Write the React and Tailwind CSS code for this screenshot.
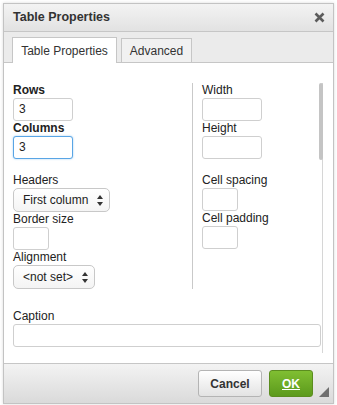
import React from "react";

const font = { fontFamily: '"Liberation Sans", Arial, sans-serif' };

// small up/down arrows used by the selects
const SelectArrows = () => (
  <svg width="6" height="11" viewBox="0 0 6 11" className="shrink-0">
    <path d="M3 0L6 4H0z" fill="#333" />
    <path d="M3 11L0 7h6z" fill="#333" />
  </svg>
);

const Field = ({ label, bold, width, value, focused }) => (
  <div className="flex flex-col">
    <label className={`text-[12px] leading-[15px] text-[#222] ${bold ? "font-bold" : ""}`}>
      {label}
    </label>
    <div
      className={`h-[23px] rounded-[3px] border bg-white px-[5px] text-[12px] leading-[21px] text-[#222] ${width} ${
        focused
          ? "border-[#59a5e5] shadow-[0_0_2px_rgba(89,165,229,0.6)]"
          : "border-[#cfcfcf]"
      }`}
    >
      {value}
    </div>
  </div>
);

const Select = ({ label, value, width }) => (
  <div className="flex flex-col">
    <label className="text-[12px] leading-[15px] text-[#222]">{label}</label>
    <div
      className={`flex h-[24px] items-center justify-between rounded-[5px] border border-[#c8c8c8] bg-gradient-to-b from-white to-[#f4f4f4] pl-[9px] pr-[6px] text-[12px] text-[#222] ${width}`}
    >
      <span>{value}</span>
      <SelectArrows />
    </div>
  </div>
);

export default function App() {
  return (
    <div className="h-[405px] w-[337px] overflow-hidden bg-white pl-[3px] pt-[3px]" style={font}>
      <div className="flex h-[401px] w-[331px] flex-col border border-[#c3c3c3] bg-white shadow-[0_0_3px_rgba(0,0,0,0.15)]">
        {/* Header */}
        <div className="flex h-[28px] shrink-0 items-center justify-between border-b border-[#c6c6c6] bg-gradient-to-b from-[#f3f3f3] to-[#e2e2e2] pl-[9px] pr-[8px]">
          <span className="text-[12.5px] font-bold text-[#333]">Table Properties</span>
          <svg width="11" height="11" viewBox="0 0 11 11">
            <path d="M1.5 1.5l8 8M9.5 1.5l-8 8" stroke="#5c5c5c" strokeWidth="2.6" />
          </svg>
        </div>

        {/* Tabs */}
        <div className="flex h-[31px] shrink-0 items-end gap-[4px] border-b border-[#c6c6c6] bg-[#ebebeb] pl-[8px]">
          <div className="-mb-px flex h-[26px] w-[105px] items-center justify-center border border-b-0 border-[#c6c6c6] bg-white text-[12px] text-[#333]">
            Table Properties
          </div>
          <div className="flex h-[24px] w-[71px] items-center justify-center border border-b-0 border-[#c6c6c6] bg-[#f1f1f1] text-[12px] text-[#333]">
            Advanced
          </div>
        </div>

        {/* Body */}
        <div className="relative flex-1 pl-[9px] pt-[20px]">
          <div className="flex">
            <div className="flex w-[179px] flex-col">
              <Field label="Rows" bold width="w-[60px]" value="3" />
              <Field label="Columns" bold width="w-[60px]" value="3" focused />
              <div className="mt-[14px]">
                <Select label="Headers" value="First column" width="w-[97px]" />
              </div>
              <Field label="Border size" width="w-[36px]" />
              <Select label="Alignment" value="<not set>" width="w-[82px]" />
            </div>
            <div className="w-px bg-[#c9c9c9]" />
            <div className="flex flex-col pl-[9px]">
              <Field label="Width" width="w-[60px]" />
              <Field label="Height" width="w-[60px]" />
              <div className="mt-[14px]">
                <Field label="Cell spacing" width="w-[36px]" />
              </div>
              <Field label="Cell padding" width="w-[36px]" />
            </div>
          </div>

          <div className="mt-[20px] w-[308px]">
            <Field label="Caption" width="w-full" />
          </div>

          {/* scrollbar */}
          <div className="absolute right-[10px] top-[20px] h-[270px] w-px bg-[#d6d6d6]" />
          <div className="absolute right-[10px] top-[20px] h-[77px] w-[4px] rounded-[2px] bg-[#c4c4c4]" />
        </div>

        {/* Footer */}
        <div className="relative flex h-[40px] shrink-0 items-center justify-end gap-[7px] border-t border-[#c6c6c6] bg-gradient-to-b from-[#f3f3f3] to-[#dadada] pr-[20px]">
          <button className="h-[27px] w-[64px] rounded-[3px] border border-[#b4b4b4] bg-gradient-to-b from-white to-[#e3e3e3] text-[12px] font-bold text-[#333]">
            Cancel
          </button>
          <button className="h-[27px] w-[44px] rounded-[3px] border border-[#5b8d1f] bg-gradient-to-b from-[#80bf32] to-[#5c9a1c] text-[12px] font-bold text-white underline">
            OK
          </button>
          <div className="absolute bottom-[6px] right-[4px] h-0 w-0 border-b-[10px] border-l-[10px] border-b-[#6f6f6f] border-l-transparent" />
        </div>
      </div>
    </div>
  );
}
